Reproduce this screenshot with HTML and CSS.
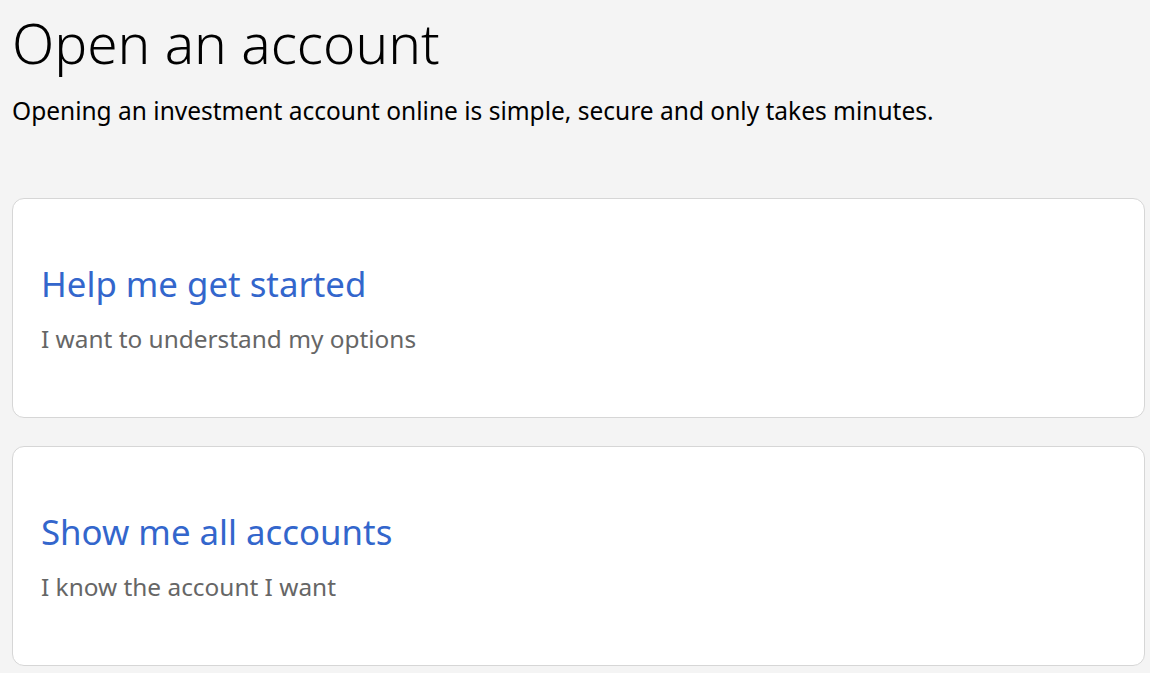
FILE: index.html
```html
<!DOCTYPE html>
<html lang="en">
<head>
<meta charset="utf-8">
<title>Open an account</title>
<link rel="stylesheet" href="styles.css">
</head>
<body>
<main class="page">
  <header class="intro">
    <h1 class="title">Open an account</h1>
    <p class="lead">Opening an investment account online is simple, secure and only takes minutes.</p>
  </header>
  <div class="cards">
    <a class="card" href="#">
      <span class="card-title">Help me get started</span>
      <span class="card-text">I want to understand my options</span>
    </a>
    <a class="card" href="#">
      <span class="card-title">Show me all accounts</span>
      <span class="card-text">I know the account I want</span>
    </a>
  </div>
</main>
</body>
</html>
```

FILE: styles.css
```css
html, body {
  margin: 0;
  padding: 0;
  background: #f4f4f4;
}
body {
  font-family: "Noto Sans", "Open Sans", sans-serif;
  color: #000;
}
.page {
  padding: 0 5px 0 12px;
}
.intro {
  padding-top: 7px;
}
.title {
  margin: 0;
  font-size: 55px;
  font-weight: 350;
  line-height: 72px;
}
.lead {
  margin: 16px 0 0;
  font-size: 24.5px;
  line-height: 32px;
}
.cards {
  display: flex;
  flex-direction: column;
  gap: 28px;
  margin-top: 71px;
}
.card {
  display: flex;
  flex-direction: column;
  padding: 62px 28px;
  background: #fff;
  border: 1px solid #d6d6d6;
  border-radius: 12px;
  text-decoration: none;
}
.card-title {
  color: #3366cc;
  font-size: 34.8px;
  line-height: 46px;
}
.card-text {
  margin-top: 16px;
  color: #666;
  font-size: 24.4px;
  line-height: 32px;
}
```
